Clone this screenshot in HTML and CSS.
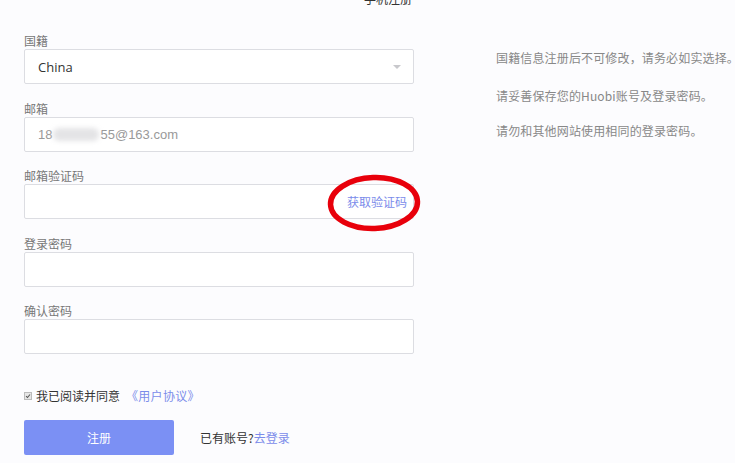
FILE: index.html
```html
<!DOCTYPE html>
<html lang="zh-CN">
<head>
<meta charset="utf-8">
<title>手机注册</title>
<link rel="stylesheet" href="styles.css">
</head>
<body>
<div class="page">
  <div class="form">
    <div class="tab-head"><span class="tab">手机注册</span></div>

    <div class="field">
      <div class="label">国籍</div>
      <div class="box select">
        <span class="value-dark">China</span>
        <span class="caret"></span>
      </div>
    </div>

    <div class="field">
      <div class="label">邮箱</div>
      <div class="box">
        <span class="value">18<span class="blur"></span>55@163.com</span>
      </div>
    </div>

    <div class="field">
      <div class="label">邮箱验证码</div>
      <div class="box code-box">
        <span class="get-code">获取验证码</span>
        <svg class="mark" width="104" height="68" viewBox="0 0 104 68" aria-hidden="true">
          <ellipse cx="52" cy="34" rx="43.5" ry="25.5" fill="none" stroke="#e8000b" stroke-width="5.5" transform="rotate(-2 52 34)"/>
        </svg>
      </div>
    </div>

    <div class="field">
      <div class="label">登录密码</div>
      <div class="box"></div>
    </div>

    <div class="field">
      <div class="label">确认密码</div>
      <div class="box"></div>
    </div>

    <div class="agree">
      <span class="check"><svg width="8" height="8" viewBox="0 0 8 8"><path d="M1.5 4.2 L3.3 6 L6.7 2" fill="none" stroke="#555" stroke-width="1.4"/></svg></span>
      <span class="agree-text">我已阅读并同意</span>
      <span class="link protocol">《用户协议》</span>
    </div>

    <div class="actions">
      <button class="submit">注册</button>
      <span class="have">已有账号?<span class="link">去登录</span></span>
    </div>
  </div>

  <div class="tips">
    <p class="tip t1">国籍信息注册后不可修改，请务必如实选择。</p>
    <p class="tip t2">请妥善保存您的Huobi账号及登录密码。</p>
    <p class="tip t3">请勿和其他网站使用相同的登录密码。</p>
  </div>
</div>
</body>
</html>
```

FILE: styles.css
```css
html, body {
  margin: 0;
  padding: 0;
}
body {
  background: #fcfcfe;
  font-family: "Noto Sans CJK SC", "Microsoft YaHei", "Noto Sans", sans-serif;
  font-size: 12px;
  color: #333;
  width: 735px;
  height: 463px;
  overflow: hidden;
}
.page {
  display: flex;
  padding-left: 24px;
}
.form {
  width: 390px;
  flex-shrink: 0;
  display: flex;
  flex-direction: column;
}
.tab-head {
  height: 33px;
  display: flex;
  justify-content: flex-end;
  padding-right: 2px;
}
.tab {
  font-size: 12px;
  line-height: 12px;
  margin-top: -7px;
  color: #333;
  height: 12px;
}
.field {
  display: flex;
  flex-direction: column;
  margin-bottom: 16.5px;
}
.label {
  color: #777;
  line-height: 16px;
  height: 16px;
}
.box {
  position: relative;
  height: 35px;
  box-sizing: border-box;
  border: 1px solid #dcdde2;
  border-radius: 2px;
  background: #fff;
  display: flex;
  align-items: center;
  padding: 0 13px;
}
.value-dark {
  font-family: "Open Sans", "Noto Sans", sans-serif;
  font-size: 13px;
  color: #333;
}
.value {
  font-family: "Liberation Sans", Arial, sans-serif;
  font-size: 13px;
  color: #999;
  display: flex;
  align-items: center;
}
.blur {
  display: inline-block;
  width: 46px;
  height: 13px;
  margin: 0 1px;
  background: #e4e4e6;
  border-radius: 6px;
  filter: blur(2.5px);
}
.select {
  justify-content: space-between;
}
.caret {
  width: 0;
  height: 0;
  border-left: 4px solid transparent;
  border-right: 4px solid transparent;
  border-top: 4px solid #c8c8cc;
  margin-right: -1px;
}
.code-box {
  justify-content: flex-end;
  padding-right: 6px;
}
.get-code {
  color: #7b8cea;
  font-size: 12px;
}
.mark {
  position: absolute;
  left: 297px;
  top: -16px;
}
.agree {
  display: flex;
  align-items: center;
  margin-top: 15px;
  height: 20px;
}
.check {
  width: 8px;
  height: 8px;
  box-sizing: border-box;
  border: 1px solid #bbb;
  background: #e6e6e6;
  display: flex;
  align-items: center;
  justify-content: center;
  margin-right: 4px;
}
.check svg {
  display: block;
}
.agree-text {
  color: #333;
  font-size: 12px;
}
.link {
  color: #7b8cea;
}
.protocol {
  margin-left: 6px;
  letter-spacing: 0.3px;
}
.actions {
  display: flex;
  align-items: center;
  margin-top: 14px;
}
.submit {
  width: 150px;
  height: 35px;
  border: none;
  border-radius: 2px;
  background: #7b90f4;
  color: #fff;
  font-family: "Noto Sans CJK SC", sans-serif;
  font-size: 12px;
  padding: 0;
}
.have {
  margin-left: 26px;
  color: #333;
  font-size: 12px;
}
.tips {
  margin-left: 82px;
  display: flex;
  flex-direction: column;
}
.tip {
  margin: 0;
  line-height: 16px;
  color: #888;
  font-size: 12px;
  letter-spacing: 0.15px;
  white-space: nowrap;
}
.t1 { margin-top: 50px; }
.t2 { margin-top: 22px; }
.t3 { margin-top: 19px; }
```
